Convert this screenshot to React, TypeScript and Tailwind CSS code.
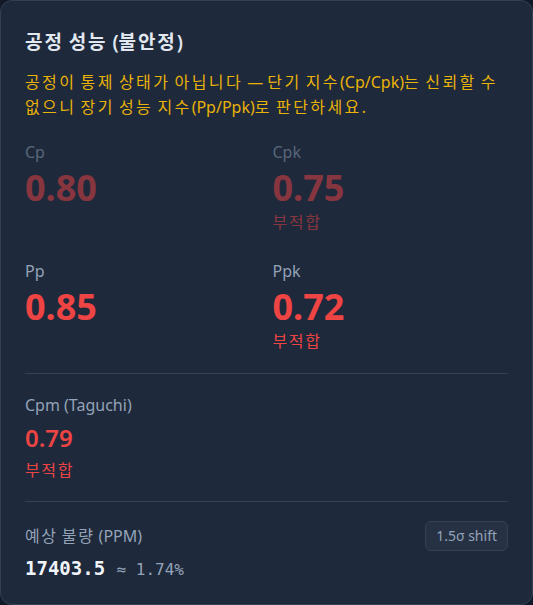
import React from "react";

const sans = { fontFamily: '"Noto Sans", "Noto Sans CJK KR", sans-serif' };

function K({ t, wide }: { t: string; wide?: boolean }) {
  const parts = t.split(/([\uac00-\ud7a3]+)/);
  return (
    <>
      {parts.map((p, i) =>
        /[\uac00-\ud7a3]/.test(p) ? (
          <span key={i} className={wide ? "tracking-[0.15em]" : "tracking-[0.1em]"}>
            {p}
          </span>
        ) : (
          <React.Fragment key={i}>{p}</React.Fragment>
        )
      )}
    </>
  );
}

function Metric({ label, value, fail, dim }: { label: string; value: string; fail?: boolean; dim?: boolean }) {
  return (
    <div className={dim ? "opacity-50" : ""}>
      <div className="text-base leading-6 text-[#94a3b8]">{label}</div>
      <div className="mt-[1px] text-4xl font-bold leading-[45px] text-[#ef4444]">{value}</div>
      {fail ? (
        <div className="text-base leading-6 text-[#ef4444]">
          <K t="부적합" />
        </div>
      ) : null}
    </div>
  );
}

export default function App() {
  return (
    <div className="min-h-screen bg-[#111827]" style={sans}>
      <div className="h-[605px] w-[533px] rounded-xl border border-[#334155] bg-[#1e293b] px-6 pt-[27px]">
        <h2 className="text-[19px] font-semibold leading-7 text-[#e2e8f0]">
          <K t="공정 성능 (불안정)" />
        </h2>
        <p className="mt-[14px] text-base leading-[25px] text-[#eab308]">
          <K wide t="공정이 통제 상태가 아닙니다 — 단기 지수(Cp/Cpk)는 신뢰할 수" />
          <br />
          <K wide t="없으니 장기 성능 지수(Pp/Ppk)로 판단하세요." />
        </p>
        <div className="mt-[20px] grid grid-cols-2 gap-x-3 gap-y-[25px]">
          <Metric label="Cp" value="0.80" dim />
          <Metric label="Cpk" value="0.75" fail dim />
          <Metric label="Pp" value="0.85" />
          <Metric label="Ppk" value="0.72" fail />
        </div>
        <div className="mt-[20px] border-t border-[#334155] pt-[19px] pb-[19px]">
          <div className="text-base leading-6 text-[#94a3b8]">Cpm (Taguchi)</div>
          <div className="mt-[5px] text-2xl font-semibold leading-8 text-[#ef4444]">0.79</div>
          <div className="mt-[4px] text-base leading-6 text-[#ef4444]">
            <K t="부적합" />
          </div>
        </div>
        <div className="border-t border-[#334155] pt-[19px]">
          <div className="flex items-center justify-between">
            <div className="text-base leading-6 text-[#94a3b8]">
              <K t="예상 불량 (PPM)" />
            </div>
            <div className="rounded-md border border-[#334155] bg-[#263244] px-[10px] py-[4px] text-sm leading-5 text-[#94a3b8]">
              1.5σ shift
            </div>
          </div>
          <div
            className="mt-[3px] text-[19px] leading-7"
            style={{ fontFamily: '"DejaVu Sans Mono", monospace' }}
          >
            <span className="font-bold text-[#f1f5f9]">17403.5</span>{" "}
            <span className="text-base text-[#94a3b8]">≈ 1.74%</span>
          </div>
        </div>
      </div>
    </div>
  );
}
